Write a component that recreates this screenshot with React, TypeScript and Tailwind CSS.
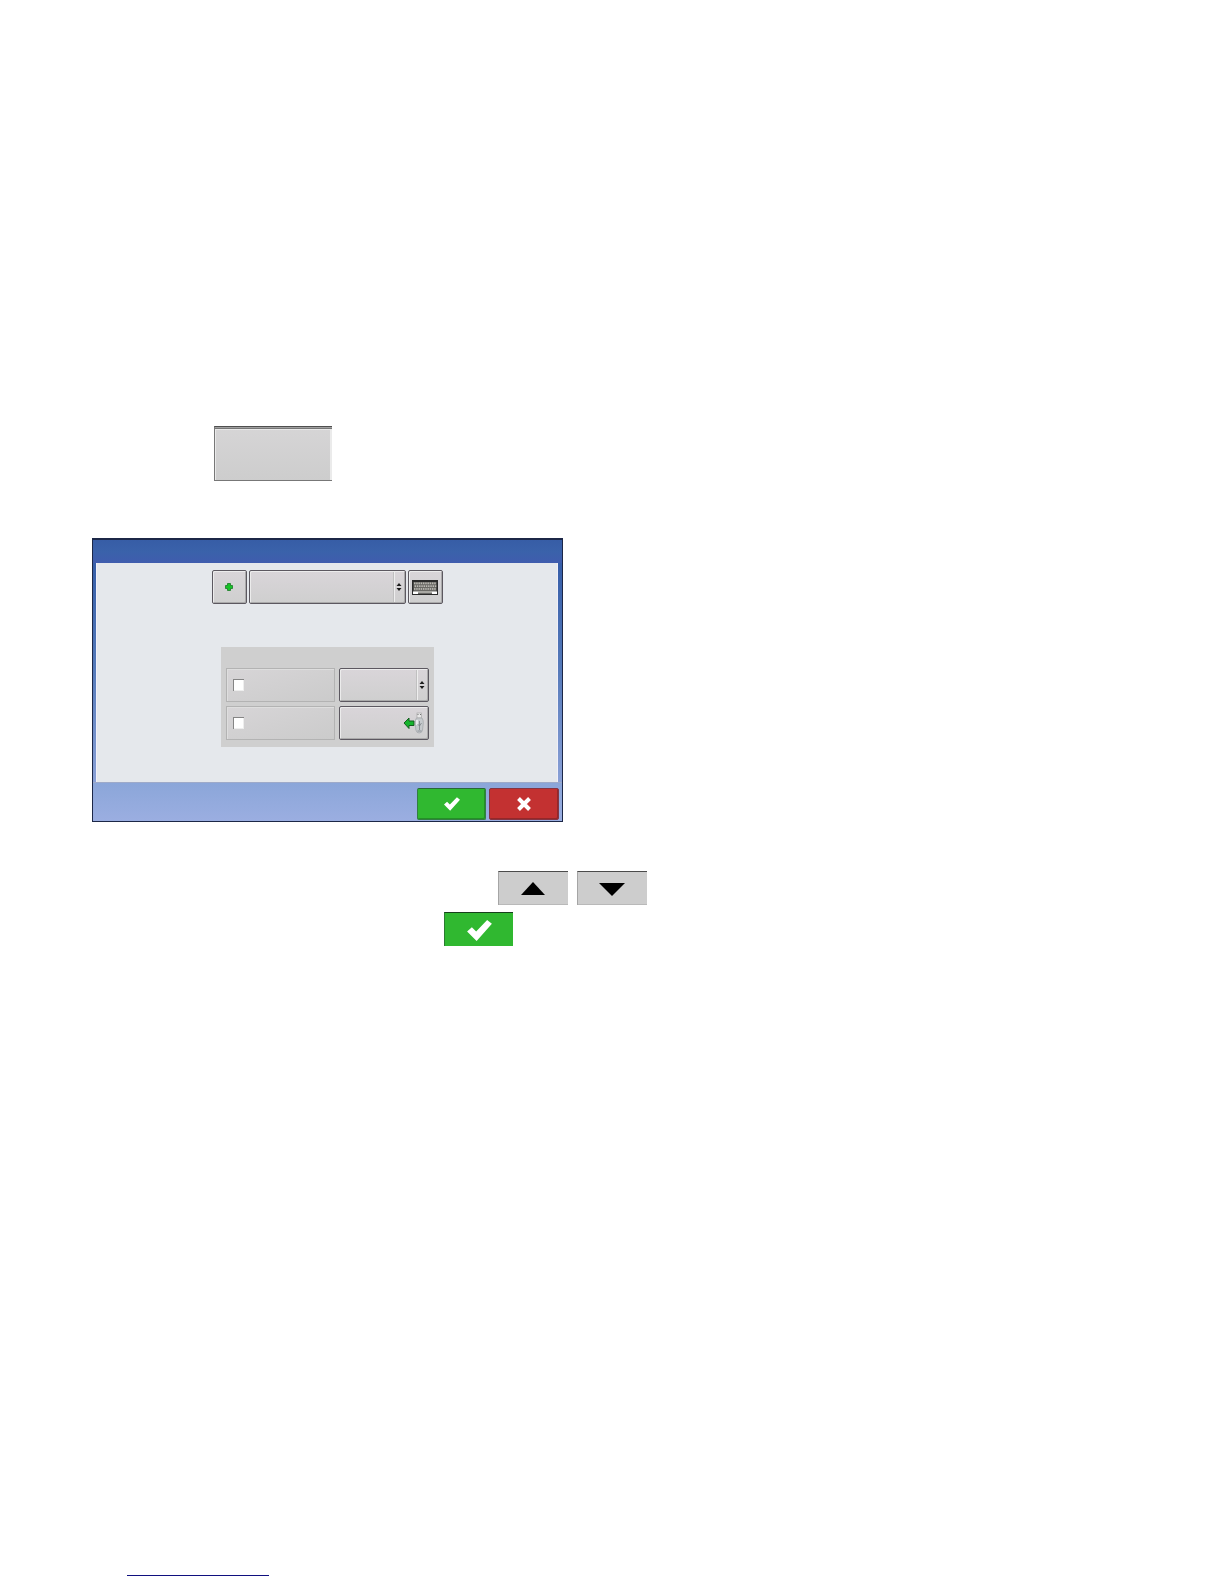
import React from "react";

const raised =
  "rounded-xs border border-[#5c5860] bg-linear-to-b from-[#d9d5d9] to-[#cfcfcf] shadow-[inset_1px_1px_0_#ececec,inset_-1px_-1px_0_#aaaaaa]";

function Check({ className }: { className: string }) {
  return (
    <svg viewBox="0 0 26 22" className={className} fill="#ffffff" aria-hidden="true">
      <path d="M0 12 5 7.500 9.500 12 21 0 26 4 10 22Z" />
    </svg>
  );
}

function Spinner() {
  return (
    <svg viewBox="0 0 6 8" className="h-2 w-1.5" fill="#1c1c1c" aria-hidden="true">
      <path d="M3 0 5.500 3H.5ZM3 8 .5 5h5Z" />
    </svg>
  );
}

function Keyboard() {
  const rows = [0, 1, 2];
  const keys = [0, 1, 2, 3, 4, 5, 6, 7, 8, 9];
  return (
    <svg viewBox="0 0 26 15" className="h-[15px] w-[26px]" aria-hidden="true">
      <rect width="26" height="15" fill="#2a2a2a" />
      <rect x="1.500" y="2" width="23" height="10" fill="#6b6a66" />
      {rows.map((r) =>
        keys.map((k) => (
          <rect key={`${r}-${k}`} x={2 + k * 2.25 + (r % 2) * 0.6} y={2.5 + r * 2.8} width="1.400" height="1.700" fill="#bdbbb5" />
        ))
      )}
      <rect x="6" y="11" width="14" height="2.500" fill="#a9a8a3" />
      <rect x="1" y="11.500" width="5" height="2.500" fill="#ffffff" />
      <rect x="20" y="11.500" width="5" height="2.500" fill="#ffffff" />
    </svg>
  );
}

function UsbImport() {
  return (
    <svg viewBox="0 0 22 22" className="h-[22px] w-[22px]" aria-hidden="true">
      <path d="M2 11 7 6v3h5v4.500H7v3Z" fill="#16b52d" stroke="#145c1e" strokeWidth="1" strokeLinejoin="round" />
      <rect x="15" y="1" width="4.500" height="5" fill="#e8e8e8" stroke="#a8a8a8" strokeWidth=".7" />
      <path d="M15.500 2.500h1M18 2.500h1" stroke="#707070" />
      <path d="M14.500 6h5.500q1.500 2 1.300 5l-.8 7q-.5 3-3.300 3t-3.300-3l-.8-7Q13 8 14.500 6Z" fill="#c6cacd" stroke="#a0a5a8" strokeWidth=".7" />
      <path d="M15 8v5" stroke="#f6f6f6" strokeWidth="1.500" />
      <path d="M17.500 9v9M15.500 12l2 2 2-3M15.500 19h4" fill="none" stroke="#7d8388" strokeWidth=".8" />
    </svg>
  );
}

function Dropdown({ label, className, side }: { label: string; className: string; side: string }) {
  return (
    <div className={`relative h-[34px] ${className}`}>
      <select aria-label={label} className={`h-full w-full appearance-none ${raised}`}>
        <option value="" />
      </select>
      <span className={`pointer-events-none absolute inset-y-0.5 right-px flex items-center justify-center border-l border-[#c0c0c0] shadow-[inset_1px_0_0_#eeeeee] ${side}`}>
        <Spinner />
      </span>
    </div>
  );
}

function OptionBox({ label }: { label: string }) {
  return (
    <label className="flex h-[34px] w-[109px] items-center border border-[#b3b3b3] bg-linear-to-br from-[#d7d5d7] to-[#cbcbcb] pl-1.5 shadow-[inset_1px_1px_0_#dedede]">
      <input
        type="checkbox"
        aria-label={label}
        className="h-3 w-[11px] appearance-none border-t border-l border-[#858585] bg-white shadow-[inset_-1px_-1px_0_#eeeeee] checked:bg-[#2fb62f]"
      />
    </label>
  );
}

function Dialog() {
  return (
    <section
      aria-label="Import"
      className="mt-[57px] flex w-full max-w-[471px] flex-col border-t-2 border-r border-b border-l border-[#1c2747] bg-linear-to-b from-[#375fa9] from-10% via-[#5479b9] via-45% to-[#9bade0]"
    >
      <header className="h-[23px] bg-linear-to-b from-[#375da6] via-[#3a62aa] to-[#405cae]" />
      <div className="mr-1 ml-[3px] flex h-[219px] flex-col items-center border-x border-[#f0eff8] bg-[#e5e8ec] pt-[7px]">
        <div className="flex w-[231px] gap-0.5">
          <button type="button" aria-label="Add" className={`flex h-[34px] w-[35px] items-center justify-center ${raised}`}>
            <svg viewBox="0 0 8 8" className="h-2 w-2" aria-hidden="true">
              <path d="M2.500.5h3v2h2v3h-2v2h-3v-2h-2v-3h2Z" fill="#16c427" stroke="#187a24" strokeWidth=".8" />
            </svg>
          </button>
          <Dropdown label="Name" className="flex-1" side="w-3" />
          <button type="button" aria-label="Keyboard" className={`flex h-[34px] w-[35px] items-center justify-center ${raised}`}>
            <Keyboard />
          </button>
        </div>
        <fieldset className="mt-[43px] flex h-[100px] w-[213px] flex-col gap-1 bg-[#cfcfcf] pt-[21px] pr-[5px] pl-[5px]">
          <div className="flex justify-between">
            <OptionBox label="First option" />
            <Dropdown label="First option value" className="w-[90px]" side="w-3" />
          </div>
          <div className="flex justify-between">
            <OptionBox label="Second option" />
            <button type="button" aria-label="Import from USB" className={`flex h-[34px] w-[90px] items-center justify-end pr-1 ${raised}`}>
              <UsbImport />
            </button>
          </div>
        </fieldset>
      </div>
      <footer className="flex h-[39px] items-end justify-end gap-[3px] border-t border-[#9eaac9] bg-linear-to-b from-[#8ba6d9] to-[#9baee1] pr-[3px] pb-px">
        <button type="button" aria-label="Accept" className="flex h-8 w-[69px] items-center justify-center rounded-xs border border-[#327e42] border-t-[#286735] bg-[#30b830] shadow-[inset_-1px_-1px_0_#249026]">
          <Check className="h-[14px] w-4" />
        </button>
        <button type="button" aria-label="Cancel" className="flex h-8 w-[70px] items-center justify-center rounded-xs border border-[#853443] bg-[#c33131] shadow-[inset_-1px_-1px_0_#952728]">
          <svg viewBox="0 0 14 14" className="h-3.5 w-3.5" fill="none" stroke="#ffffff" strokeWidth="4" aria-hidden="true">
            <path d="m1.500 1.500 11 11M12.500 1.500l-11 11" />
          </svg>
        </button>
      </footer>
    </section>
  );
}

const arrowButton =
  "flex h-[34px] w-[70px] items-center justify-center border-t border-l border-t-[#4b4b4b] border-l-[#a5a5a5] bg-[#cdcdcd] shadow-[inset_0_-1px_0_#b9b9b9]";

export default function App() {
  return (
    <main className="flex min-h-screen flex-col bg-white px-[92px] pt-[426px] font-['Liberation_Sans',sans-serif]">
      <button
        type="button"
        aria-label="Import setup"
        className="ml-[122px] h-[55px] w-[118px] border-t border-b border-l border-[#777777] border-t-[#4f4f4f] bg-linear-to-b from-[#d6d5d6] to-[#cdcdcd] shadow-[inset_0_1px_0_#a0a0a0,inset_0_2px_0_#777777,inset_1px_3px_0_#e9e9e9,inset_-2px_0_0_#ebebeb]"
      />
      <Dialog />
      <div className="mt-[49px] ml-[406px] flex gap-[9px]">
        <button type="button" aria-label="Move up" className={arrowButton}>
          <svg viewBox="0 0 24 13" className="mr-0.5 h-[13px] w-6" aria-hidden="true">
            <path d="M12 0 24 13H0Z" />
          </svg>
        </button>
        <button type="button" aria-label="Move down" className={arrowButton}>
          <svg viewBox="0 0 26 13" className="mt-0.5 mr-0.5 h-[13px] w-[26px]" aria-hidden="true">
            <path d="M0 0H26L13 13Z" />
          </svg>
        </button>
      </div>
      <button
        type="button"
        aria-label="Confirm"
        className="mt-[7px] ml-[352px] flex h-[34px] w-[69px] items-center justify-center border-t border-l border-t-[#163f1b] border-l-[#2b7b31] bg-[#30b830]"
      >
        <Check className="mt-0.5 h-[21px] w-[25px]" />
      </button>
      <a href="#" aria-label="Website" className="mt-auto mb-2 ml-[35px] h-5 w-[142px] border-b border-[#10107f]" />
    </main>
  );
}
